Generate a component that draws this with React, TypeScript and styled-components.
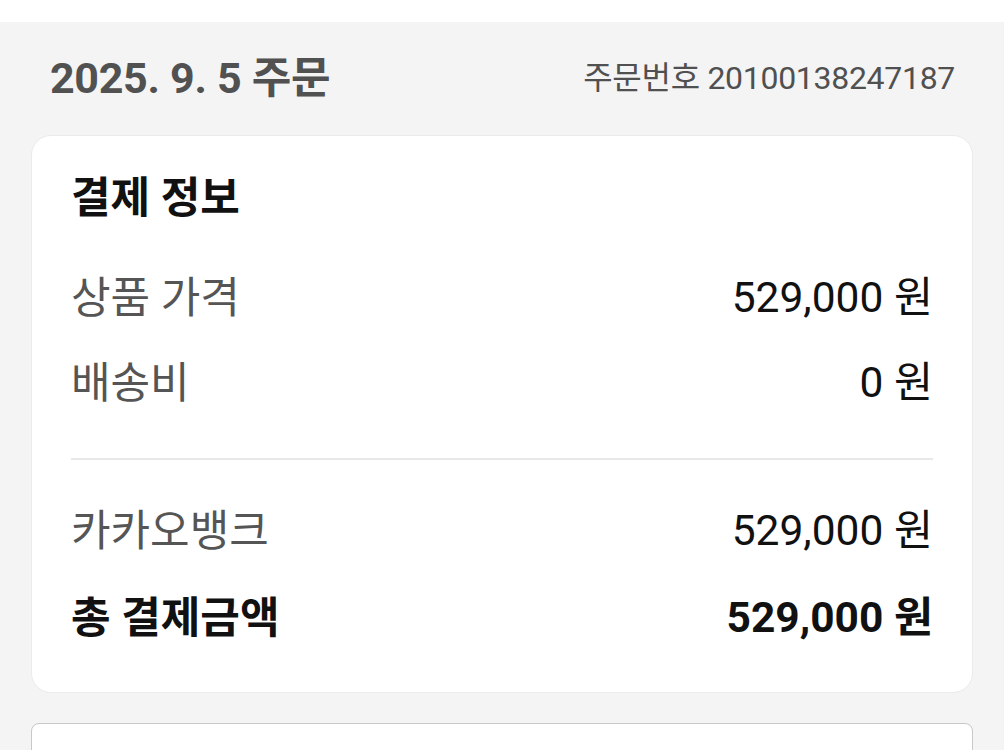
import React from "react";
import styled, { createGlobalStyle } from "styled-components";

const Global = createGlobalStyle`
  html, body { margin: 0; padding: 0; background: #f4f4f4; }
  body { font-family: Roboto, "Noto Sans CJK KR", sans-serif; }
`;

const TopStrip = styled.div`
  height: 22px;
  background: #ffffff;
`;

const Page = styled.div`
  padding: 0 31px;
  display: flex;
  flex-direction: column;
`;

const HeaderRow = styled.div`
  height: 113px;
  display: flex;
  align-items: center;
  justify-content: space-between;
  padding: 0 18px 0 19px;
`;

const OrderDate = styled.h1`
  margin: 0;
  font-size: 43px;
  font-weight: 700;
  color: #515151;
  line-height: 1.2;
  letter-spacing: -0.3px;
`;

const OrderNo = styled.span`
  font-size: 32px;
  color: #505050;
  line-height: 1.2;
  letter-spacing: -0.3px;
`;

const Card = styled.section`
  background: #ffffff;
  border: 1px solid #ebebeb;
  border-radius: 20px;
  padding: 38px 39px 50px 39px;
  display: flex;
  flex-direction: column;
`;

const Title = styled.h2`
  margin: 0 0 52px 0;
  font-size: 43px;
  font-weight: 700;
  color: #111111;
  line-height: 48px;
`;

const Row = styled.div<{ $gap?: number }>`
  display: flex;
  justify-content: space-between;
  align-items: center;
  height: 48px;
  margin: 0 0 ${(p) => p.$gap ?? 0}px 0;
  line-height: 48px;
`;

const Label = styled.span<{ $strong?: boolean }>`
  font-size: 43px;
  font-weight: ${(p) => (p.$strong ? 700 : 400)};
  color: ${(p) => (p.$strong ? "#111111" : "#555555")};
`;

const Value = styled.span<{ $strong?: boolean }>`
  font-size: 42.5px;
  font-weight: ${(p) => (p.$strong ? 700 : 400)};
  color: #111111;
`;

const Divider = styled.hr`
  border: none;
  border-top: 2px solid #e8e8e8;
  margin: 0 0 47px 0;
`;

const NextCard = styled.section`
  margin-top: 30px;
  height: 80px;
  background: #ffffff;
  border: 1px solid #c8c8c8;
  border-radius: 8px;
`;

export default function App() {
  return (
    <>
      <Global />
      <TopStrip />
      <Page>
        <HeaderRow>
          <OrderDate>2025. 9. 5 주문</OrderDate>
          <OrderNo>주문번호 20100138247187</OrderNo>
        </HeaderRow>
        <Card>
          <Title>결제 정보</Title>
          <Row $gap={37}>
            <Label>상품 가격</Label>
            <Value>529,000 원</Value>
          </Row>
          <Row $gap={51}>
            <Label>배송비</Label>
            <Value>0 원</Value>
          </Row>
          <Divider />
          <Row $gap={39}>
            <Label>카카오뱅크</Label>
            <Value>529,000 원</Value>
          </Row>
          <Row>
            <Label $strong>총 결제금액</Label>
            <Value $strong>529,000 원</Value>
          </Row>
        </Card>
        <NextCard />
      </Page>
    </>
  );
}
